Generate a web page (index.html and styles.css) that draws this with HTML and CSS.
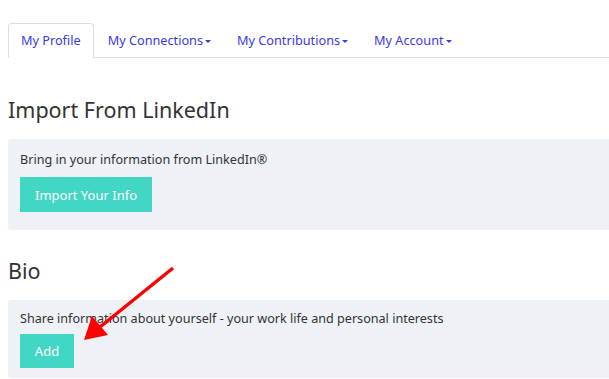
FILE: index.html
```html
<!DOCTYPE html>
<html>
<head>
<meta charset="utf-8">
<link rel="stylesheet" href="styles.css">
</head>
<body>
<nav class="tabs">
  <a class="tab active">My Profile</a>
  <a class="tab">My Connections<span class="caret"></span></a>
  <a class="tab">My Contributions<span class="caret"></span></a>
  <a class="tab">My Account<span class="caret"></span></a>
</nav>
<section class="section">
  <h2 class="title">Import From LinkedIn</h2>
  <div class="panel">
    <p class="desc">Bring in your information from LinkedIn®</p>
    <button class="btn">Import Your Info</button>
  </div>
</section>
<section class="section">
  <h2 class="title">Bio</h2>
  <div class="panel">
    <p class="desc">Share information about yourself - your work life and personal interests</p>
    <button class="btn btn-small">Add</button>
  </div>
</section>
<svg class="arrow" width="609" height="379" viewBox="0 0 609 379">
  <line x1="173" y1="268" x2="100" y2="327" stroke="#f00" stroke-width="3.5"/>
  <polygon points="84,340 92,316 108,335" fill="#f00"/>
</svg>
</body>
</html>
```
FILE: styles.css
```css
html, body {
  margin: 0;
  padding: 0;
  background: #fff;
}
body {
  font-family: "Noto Sans", "Open Sans", sans-serif;
  color: #333;
  padding: 23px 0 0 8px;
  position: relative;
  overflow: hidden;
  height: 379px;
  box-sizing: border-box;
}
.tabs {
  display: flex;
  border-bottom: 1px solid #ddd;
  height: 34px;
}
.tab {
  display: flex;
  align-items: center;
  padding: 0 12px 1px;
  font-size: 12.7px;
  color: #3a3ae6;
  margin-right: 0;
  border: 1px solid transparent;
  border-radius: 4px 4px 0 0;
  height: 35px;
  box-sizing: border-box;
  margin-bottom: -1px;
}
.tab.active {
  border-color: #ddd;
  border-bottom-color: #fff;
  background: #fff;
  margin-right: 1px;
}
.caret {
  display: inline-block;
  width: 0;
  height: 0;
  border-left: 3px solid transparent;
  border-right: 3px solid transparent;
  border-top: 3px solid #3a3ae6;
  margin-left: 2px;
  margin-top: 2px;
}
.title {
  font-weight: 400;
  font-size: 21.5px;
  margin: 0;
  padding-top: 38px;
  line-height: 28px;
  height: 43px;
  color: #333;
}
.section + .section .title {
  padding-top: 27px;
}
.panel {
  background: #eef1f5;
  border-radius: 3px 0 0 3px;
  padding: 12px 12px 18px;
  height: 91px;
  box-sizing: border-box;
  margin-right: -4px;
}
.section + .section .panel {
  height: 78px;
  padding-top: 10px;
}
.section + .section .desc {
  margin-bottom: 6px;
}
.desc {
  margin: 0 0 8px;
  font-size: 12.6px;
  line-height: 18px;
}
.btn {
  display: block;
  background: #42d6c4;
  color: #fff;
  border: 0;
  font-family: inherit;
  font-size: 13px;
  height: 35px;
  padding: 0 15px;
  border-radius: 0;
}
.btn-small {
  width: 54px;
  padding: 0;
  height: 34px;
}
.arrow {
  position: absolute;
  left: 0;
  top: 0;
  pointer-events: none;
}
```
